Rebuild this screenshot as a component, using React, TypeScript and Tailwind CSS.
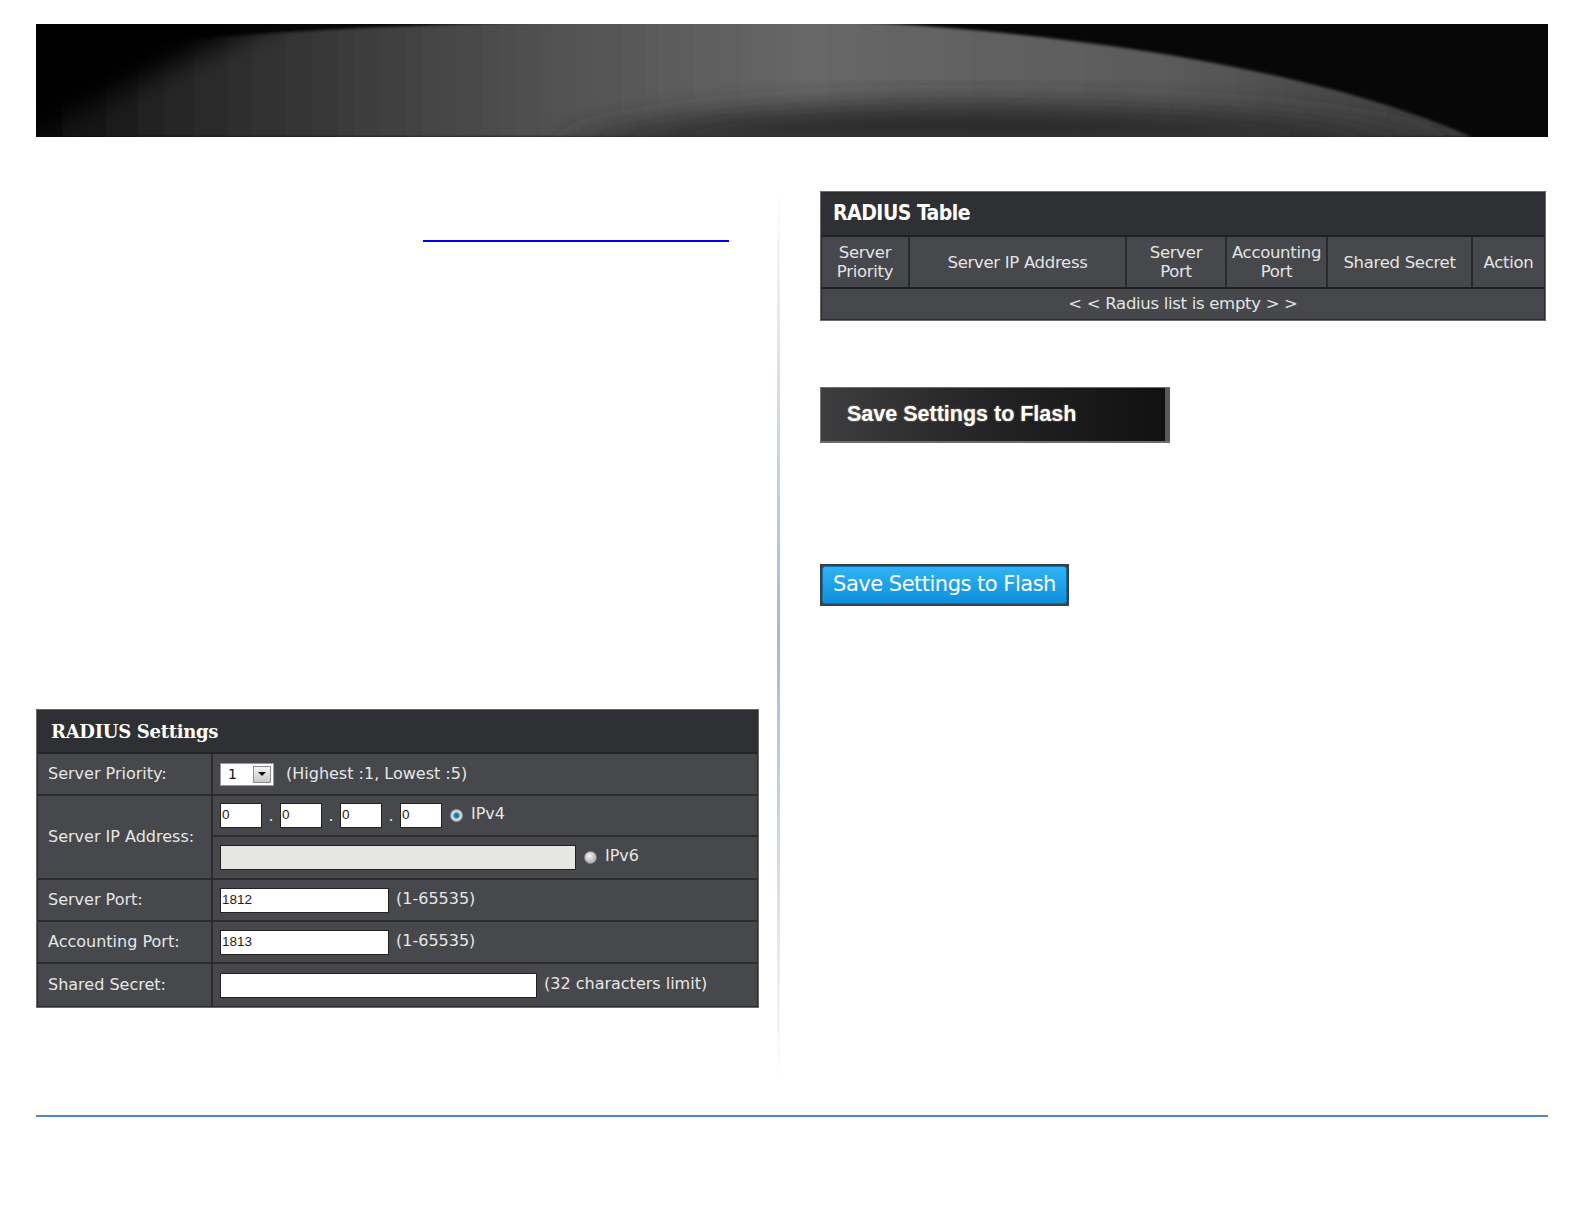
// App.tsx
//
// Manual page: RADIUS settings form, RADIUS table and the two "Save Settings to Flash" buttons.

const ui = "font-['DejaVu_Sans','Verdana',sans-serif]";
const arial = "font-['Liberation_Sans','Arial',sans-serif]";

function Banner() {
  return (
    <div className="mx-[36px] h-[113px] overflow-hidden bg-[#070707]">
      <svg viewBox="0 0 1501 113" width="1501" height="113" preserveAspectRatio="none">
        <defs>
          <linearGradient id="swoosh" x1="0" y1="0" x2="1" y2="0">
            <stop offset="0" stopColor="#050505" />
            <stop offset="0.12" stopColor="#262626" />
            <stop offset="0.35" stopColor="#4e4e4e" />
            <stop offset="0.55" stopColor="#676767" />
            <stop offset="0.8" stopColor="#5a5a5a" />
            <stop offset="1" stopColor="#3a3a3a" />
          </linearGradient>
          <filter id="soft" x="-20%" y="-50%" width="140%" height="200%">
            <feGaussianBlur stdDeviation="14" />
          </filter>
          <filter id="edge" x="-5%" y="-20%" width="110%" height="140%">
            <feGaussianBlur stdDeviation="1.5" />
          </filter>
        </defs>
        <path
          d="M -40 113 L -40 40 C 120 10 400 -6 780 -4 C 1000 4 1270 40 1436 113 Z"
          fill="url(#swoosh)"
          filter="url(#edge)"
        />
        <path
          d="M 510 125 C 620 86 820 76 1000 80 C 1200 84 1330 96 1420 125 Z"
          fill="#2a2a2a"
          filter="url(#soft)"
        />
        <path d="M -60 -30 L 300 -30 C 170 20 60 80 -60 140 Z" fill="#050505" filter="url(#soft)" />
      </svg>
    </div>
  );
}

function TextBox({ w, value, disabled }: { w: string; value?: string; disabled?: boolean }) {
  return (
    <div
      className={`${w} h-[25px] border border-[#222] flex items-center pl-[1px] text-[13.5px] text-[#2a1a1a] ${arial} ${
        disabled ? "bg-[#e6e6e2]" : "bg-white"
      }`}
    >
      {value}
    </div>
  );
}

function Radio({ on }: { on?: boolean }) {
  return (
    <span
      className={`inline-block w-[13px] h-[13px] rounded-full border ${
        on
          ? "border-[#9aa6ad] bg-[radial-gradient(circle,#0f6e9c_0,#2a8fc4_35%,#d6dde2_45%,#aeb7bd_100%)]"
          : "border-[#8a8a8a] bg-[radial-gradient(circle_at_40%_35%,#f4f4f4_0,#bdbdbd_60%,#9a9a9a_100%)]"
      }`}
    />
  );
}

function Row({ label, children, last }: { label: string; children: React.ReactNode; last?: boolean }) {
  return (
    <div className={`flex h-[42px] ${last ? "" : "border-b-2 border-[#2c2c2f]"}`}>
      <div className="w-[175px] shrink-0 flex items-center pl-[10px] border-r-2 border-[#2c2c2f]">{label}</div>
      <div className="flex-1 flex items-center pl-[7px] gap-[7px]">{children}</div>
    </div>
  );
}

function RadiusSettings() {
  return (
    <div className={`w-[723px] border border-[#6a6a6a] bg-[#2c2c2f] p-[1px] ${ui} text-[16px] text-[#e6e6e6]`}>
      <div className="h-[43px] flex items-center pl-[13px] bg-[#2f3034] border-b-2 border-[#242426]">
        <span className="font-['DejaVu_Serif','Georgia',serif] font-bold text-[18px] text-white tracking-[-0.3px]">
          RADIUS Settings
        </span>
      </div>
      <div className="bg-[#47484c]">
        <Row label="Server Priority:">
          <div className="w-[54px] h-[23px] bg-white border border-[#999] flex items-center justify-between pl-[7px] pr-[2px]">
            <span className="text-[14px] text-[#111]">1</span>
            <span className="w-[18px] h-[17px] border border-[#8c8c8c] bg-gradient-to-b from-[#f4f4f4] to-[#c9c9c9] flex items-center justify-center">
              <span className="w-0 h-0 border-l-[4px] border-r-[4px] border-t-[4px] border-l-transparent border-r-transparent border-t-[#111]" />
            </span>
          </div>
          <span className="ml-[5px]">(Highest :1, Lowest :5)</span>
        </Row>
        <div className="flex h-[84px] border-b-2 border-[#2c2c2f]">
          <div className="w-[175px] shrink-0 flex items-center pl-[10px] border-r-2 border-[#2c2c2f]">
            Server IP Address:
          </div>
          <div className="flex-1 flex flex-col">
            <div className="h-[41px] flex items-center pl-[7px] border-b-2 border-[#2c2c2f]">
              <TextBox w="w-[42px]" value="0" />
              <span className="w-[18px] text-center">.</span>
              <TextBox w="w-[42px]" value="0" />
              <span className="w-[18px] text-center">.</span>
              <TextBox w="w-[42px]" value="0" />
              <span className="w-[18px] text-center">.</span>
              <TextBox w="w-[42px]" value="0" />
              <span className="ml-[8px] mr-[8px] flex">
                <Radio on />
              </span>
              <span className="-mt-[3px]">IPv4</span>
            </div>
            <div className="flex-1 flex items-center pl-[7px]">
              <TextBox w="w-[356px]" disabled />
              <span className="ml-[8px] mr-[8px] flex">
                <Radio />
              </span>
              <span className="-mt-[3px]">IPv6</span>
            </div>
          </div>
        </div>
        <Row label="Server Port:">
          <TextBox w="w-[169px]" value="1812" />
          <span className="-mt-[3px]">(1-65535)</span>
        </Row>
        <Row label="Accounting Port:">
          <TextBox w="w-[169px]" value="1813" />
          <span className="-mt-[3px]">(1-65535)</span>
        </Row>
        <Row label="Shared Secret:" last>
          <TextBox w="w-[317px]" />
          <span className="-mt-[3px]">(32 characters limit)</span>
        </Row>
      </div>
    </div>
  );
}

function RadiusTable() {
  const cols: { w: string; label: React.ReactNode }[] = [
    { w: "w-[88px]", label: <>Server<br />Priority</> },
    { w: "w-[217px]", label: "Server IP Address" },
    { w: "w-[100px]", label: <>Server<br />Port</> },
    { w: "w-[101px]", label: <>Accounting<br />Port</> },
    { w: "w-[145px]", label: "Shared Secret" },
    { w: "w-[71px]", label: "Action" },
  ];
  return (
    <div className={`w-[726px] border border-[#6a6a6a] bg-[#2c2c2f] p-[1px] ${ui} text-[#e4e4e4]`}>
      <div className="h-[44px] flex items-center pl-[11px] bg-[#2f3034] border-b-2 border-[#202022]">
        <span className="font-['DejaVu_Sans_Condensed','DejaVu_Sans',sans-serif] font-bold text-[21px] text-white tracking-[-0.5px]">
          RADIUS Table
        </span>
      </div>
      <div className="flex h-[52px] bg-[#47484c] border-b-2 border-[#202022] text-[16.5px] leading-[19px] tracking-[-0.3px]">
        {cols.map((c, i) => (
          <div
            key={i}
            className={`${c.w} shrink-0 flex items-center justify-center text-center ${
              i < cols.length - 1 ? "border-r-2 border-[#2a2a2c]" : "flex-1"
            }`}
          >
            <span>{c.label}</span>
          </div>
        ))}
      </div>
      <div className="h-[30px] bg-[#47484c] flex items-center justify-center text-[16.5px] tracking-[-0.3px]">
        &lt; &lt; Radius list is empty &gt; &gt;
      </div>
    </div>
  );
}

function SaveDark() {
  return (
    <div className="w-[350px] h-[56px] flex border-t border-b-2 border-[#6c6c6c] bg-[#555]">
      <div className="flex-1 flex items-center pl-[26px] bg-gradient-to-r from-[#3e3e40] via-[#232325] to-[#111] border-l border-[#777]">
        <span className={`${arial} font-bold text-[21.5px] text-white [text-shadow:0_0_2px_rgba(255,220,160,0.6)]`}>
          Save Settings to Flash
        </span>
      </div>
      <div className="w-[5px] bg-[#5a5a5a]" />
    </div>
  );
}

function SaveBlue() {
  return (
    <div className="w-[249px] h-[42px] p-[2px] bg-[#3f3f41]">
      <div className="h-full rounded-[3px] border border-[#0c74b4] bg-gradient-to-b from-[#2fb4f4] to-[#0b8fdc] flex items-center justify-center">
        <span className={`${ui} text-[21px] text-white tracking-[-0.5px]`}>Save Settings to Flash</span>
      </div>
    </div>
  );
}

export default function App() {
  return (
    <div className="w-[1584px] h-[1224px] bg-white pt-[24px]">
      <Banner />
      <div className="flex mx-[36px] h-[977px]">
        <div className="w-[723px] shrink-0 flex flex-col">
          <div className="mt-[103px] ml-[387px] w-[306px] h-[2px] bg-[#0000ee]" />
          <div className="mt-[467px]">
            <RadiusSettings />
          </div>
        </div>
        <div className="ml-[18px] mt-[50px] w-[3px] h-[895px] bg-gradient-to-b from-[#ffffff] via-[#a3b8cf] to-[#ffffff]" />
        <div className="ml-[40px] flex flex-col">
          <div className="mt-[54px]">
            <RadiusTable />
          </div>
          <div className="mt-[66px]">
            <SaveDark />
          </div>
          <div className="mt-[121px]">
            <SaveBlue />
          </div>
        </div>
      </div>
      <div className="mx-[36px] mt-[1px] h-[2px] bg-[#4f86c0]" />
    </div>
  );
}
